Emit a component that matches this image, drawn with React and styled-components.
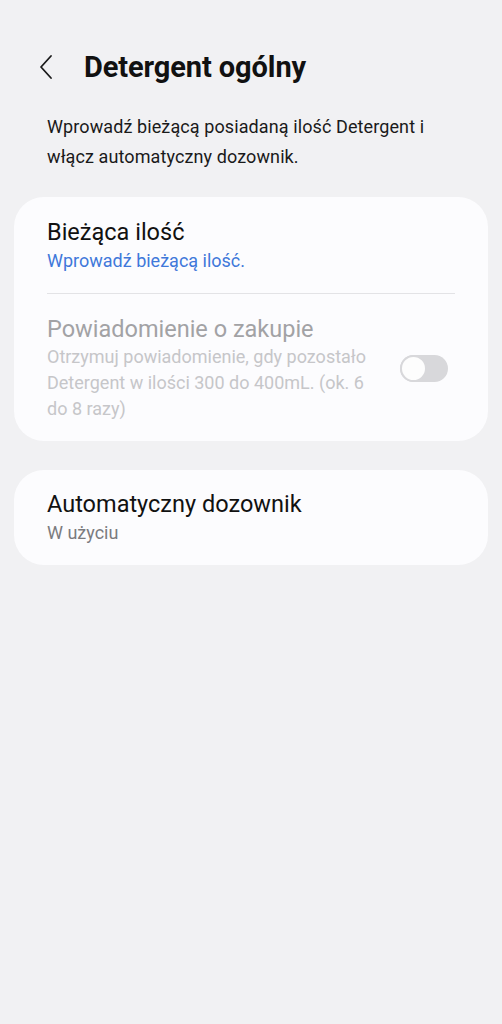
import styled, { createGlobalStyle } from 'styled-components';

const GlobalStyle = createGlobalStyle`
  html, body {
    margin: 0;
    padding: 0;
    background: #f1f1f3;
  }
  body {
    font-family: Roboto, "Noto Sans", sans-serif;
    -webkit-font-smoothing: antialiased;
  }
`;

const Page = styled.div`
  width: 502px;
  min-height: 1024px;
  background: #f1f1f3;
  box-sizing: border-box;
  padding: 0 14px;
`;

const Header = styled.div`
  display: flex;
  align-items: center;
  height: 66px;
  padding-top: 34px;
  padding-left: 24px;
`;

const BackButton = styled.button`
  border: 0;
  background: none;
  padding: 0;
  width: 22px;
  height: 28px;
  display: flex;
  align-items: center;
  justify-content: flex-start;
  margin-right: 24px;
  cursor: pointer;
`;

const Title = styled.h1`
  margin: 0;
  font-size: 29px;
  font-weight: 700;
  color: #111;
  letter-spacing: -0.1px;
`;

const Intro = styled.p`
  margin: 12px 0 0;
  padding: 0 14px 0 33px;
  font-size: 18px;
  line-height: 30px;
  letter-spacing: 0.1px;
  color: #1a1a1a;
`;

const Card = styled.section`
  background: #fcfcfe;
  border-radius: 30px;
  padding: ${p => p.$pad || '20px 33px 19px'};
  margin-top: ${p => p.$top || '0'};
`;

const Row = styled.div`
  display: flex;
  align-items: center;
  gap: 24px;
`;

const RowText = styled.div`
  flex: 1;
`;

const RowTitle = styled.div`
  font-size: 23.5px;
  line-height: 30px;
  color: ${p => (p.$muted ? '#a2a2a5' : '#111')};
`;

const RowSub = styled.div`
  font-size: 18px;
  line-height: ${p => p.$lh || '28px'};
  color: ${p => p.$color || '#7b7b7e'};
`;

const Divider = styled.hr`
  border: 0;
  border-top: 1px solid #e3e3e6;
  margin: 18px 0 20px;
`;

const Toggle = styled.div`
  width: 48px;
  height: 27px;
  border-radius: 14px;
  background: #d8d8db;
  box-sizing: border-box;
  position: relative;
  flex-shrink: 0;
  margin-right: 7px;
`;

const Knob = styled.div`
  position: absolute;
  left: 0;
  top: 0;
  width: 27px;
  height: 27px;
  box-sizing: border-box;
  border-radius: 50%;
  background: #fdfdfd;
  border: 2px solid #d8d8db;
`;

export default function App() {
  return (
    <>
      <GlobalStyle />
      <Page>
        <Header>
          <BackButton aria-label="Wstecz">
            <svg width="16" height="26" viewBox="0 0 16 26" fill="none">
              <path d="M13 2 L3 13 L13 24" stroke="#1a1a1a" strokeWidth="1.8" strokeLinecap="round" strokeLinejoin="round" />
            </svg>
          </BackButton>
          <Title>Detergent ogólny</Title>
        </Header>

        <Intro>Wprowadź bieżącą posiadaną ilość Detergent i włącz automatyczny dozownik.</Intro>

        <Card $top="25px">
          <RowTitle>Bieżąca ilość</RowTitle>
          <RowSub $color="#3f78da">Wprowadź bieżącą ilość.</RowSub>
          <Divider />
          <Row>
            <RowText>
              <RowTitle $muted>Powiadomienie o zakupie</RowTitle>
              <RowSub $color="#c6c6c9" $lh="26px">
                Otrzymuj powiadomienie, gdy pozostało Detergent w ilości 300 do 400mL. (ok. 6 do 8 razy)
              </RowSub>
            </RowText>
            <Toggle>
              <Knob />
            </Toggle>
          </Row>
        </Card>

        <Card $top="29px" $pad="19px 33px 18px">
          <RowTitle>Automatyczny dozownik</RowTitle>
          <RowSub>W użyciu</RowSub>
        </Card>
      </Page>
    </>
  );
}
